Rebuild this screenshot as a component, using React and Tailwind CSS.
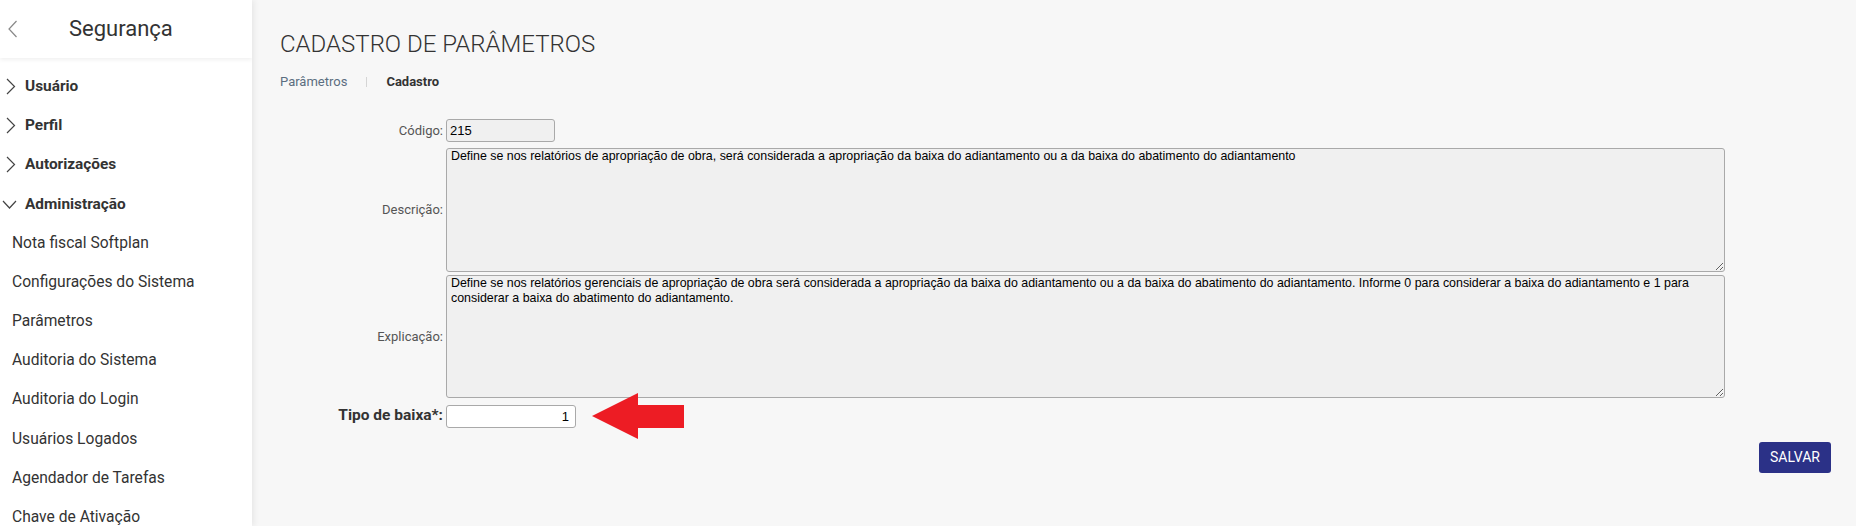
import React, { useState } from 'react';

const menu = [
    { label: 'Usuário', open: false },
    { label: 'Perfil', open: false },
    { label: 'Autorizações', open: false },
    { label: 'Administração', open: true },
];

const subItems = [
    'Nota fiscal Softplan',
    'Configurações do Sistema',
    'Parâmetros',
    'Auditoria do Sistema',
    'Auditoria do Login',
    'Usuários Logados',
    'Agendador de Tarefas',
    'Chave de Ativação',
];

const descricao =
    'Define se nos relatórios de apropriação de obra, será considerada a apropriação da baixa do adiantamento ou a da baixa do abatimento do adiantamento';

const explicacao =
    'Define se nos relatórios gerenciais de apropriação de obra será considerada a apropriação da baixa do adiantamento ou a da baixa do abatimento do adiantamento. Informe 0 para considerar a baixa do adiantamento e 1 para considerar a baixa do abatimento do adiantamento.';

const ChevronRight = () => (
    <svg width="10" height="17" viewBox="0 0 10 17" className="shrink-0">
        <path d="M1 1 L8.5 8.5 L1 16" fill="none" stroke="#444" strokeWidth="1.2" />
    </svg>
);

const ChevronDown = () => (
    <svg width="15" height="9" viewBox="0 0 15 9" className="shrink-0">
        <path d="M1 1 L7.5 8 L14 1" fill="none" stroke="#444" strokeWidth="1.2" />
    </svg>
);

const Sidebar = () => (
    <aside className="w-[252px] shrink-0 bg-white shadow-[2px_0_6px_rgba(0,0,0,0.07)] z-10 flex flex-col overflow-hidden">
        <div className="h-[58px] shrink-0 flex items-center shadow-[0_2px_4px_rgba(0,0,0,0.06)]">
            <svg width="11" height="18" viewBox="0 0 11 18" className="ml-[7px]">
                <path d="M9.5 1 L2 9 L9.5 17" fill="none" stroke="#888" strokeWidth="1.2" />
            </svg>
            <span className="ml-[51px] text-[22px] text-[#333] leading-none">Segurança</span>
        </div>
        <nav className="pt-[9px] shrink-0">
            {menu.map((m) => (
                <div key={m.label} className="h-[39.2px] flex items-center">
                    {m.open ? (
                        <span className="w-[25px] pl-[2px] flex items-center"><ChevronDown /></span>
                    ) : (
                        <span className="w-[25px] pl-[6px] flex items-center"><ChevronRight /></span>
                    )}
                    <span className="text-[15.4px] font-bold text-[#333]">{m.label}</span>
                </div>
            ))}
            {subItems.map((s) => (
                <div key={s} className="h-[39.2px] flex items-center pl-[12px] text-[15.6px] text-[#333]">
                    {s}
                </div>
            ))}
        </nav>
    </aside>
);

const Arrow = () => (
    <svg width="92" height="46" viewBox="0 0 92 46" className="absolute left-[146px] top-1/2 -translate-y-1/2">
        <polygon points="0,23 46,0 46,12 92,12 92,35 46,35 46,46" fill="#ed1c24" />
    </svg>
);

export default function App() {
    const [tipo, setTipo] = useState('1');

    return (
        <div className="h-[526px] w-[1856px] flex overflow-hidden font-['Roboto',sans-serif]">
            <Sidebar />
            <main className="flex-1 bg-[#f7f7f7] pl-[28px] pr-[25px] pt-[29px]">
                <h1 className="text-[24px] leading-[30px] font-light text-[#333]">CADASTRO DE PARÂMETROS</h1>

                <div className="mt-[15px] flex items-center text-[13px] leading-[16px]">
                    <span className="text-[#5b6e80]">Parâmetros</span>
                    <span className="mx-[19px] w-px h-[10px] bg-[#d5d5d5]" />
                    <span className="font-bold text-[#333]">Cadastro</span>
                </div>

                <div className="mt-[29px] pr-[106px]">
                    <div className="flex items-center">
                        <label className="w-[166px] pr-[3px] text-right text-[13px] text-[#555]">Código:</label>
                        <input
                            readOnly
                            value="215"
                            className="w-[109px] h-[23px] px-[3px] border border-[#a9a9a9] rounded-[3px] bg-[#f0f0f0] text-[13px] text-black font-['Liberation_Sans',Arial,sans-serif] outline-none"
                        />
                    </div>

                    <div className="flex items-center mt-[6px]">
                        <label className="w-[166px] pr-[3px] text-right text-[13px] text-[#555]">Descrição:</label>
                        <textarea
                            readOnly
                            value={descricao}
                            className="flex-1 h-[124px] px-[4px] py-0 border border-[#a9a9a9] rounded-[3px] bg-[#f0f0f0] text-[12.4px] leading-[15px] text-black font-['Liberation_Sans',Arial,sans-serif] outline-none"
                        />
                    </div>

                    <div className="flex items-center mt-[3px]">
                        <label className="w-[166px] pr-[3px] text-right text-[13px] text-[#555]">Explicação:</label>
                        <textarea
                            readOnly
                            value={explicacao}
                            className="flex-1 h-[123px] px-[4px] py-0 border border-[#a9a9a9] rounded-[3px] bg-[#f0f0f0] text-[12.4px] leading-[15px] text-black font-['Liberation_Sans',Arial,sans-serif] outline-none"
                        />
                    </div>

                    <div className="flex items-center mt-[6px] relative">
                        <label className="w-[166px] pr-[3px] text-right text-[15.5px] font-bold text-[#333]">Tipo de baixa*:</label>
                        <div className="relative">
                            <input
                                value={tipo}
                                onChange={(e) => setTipo(e.target.value)}
                                className="w-[130px] h-[23px] px-[6px] text-right border border-[#a9a9a9] rounded-[3px] bg-white text-[13px] text-black font-['Liberation_Sans',Arial,sans-serif] outline-none"
                            />
                            <Arrow />
                        </div>
                    </div>
                </div>

                <div className="flex justify-end mt-[14px]">
                    <button className="w-[72px] h-[31px] rounded-[3px] bg-[#2b3187] text-white text-[14px] uppercase">
                        Salvar
                    </button>
                </div>
            </main>
        </div>
    );
}
